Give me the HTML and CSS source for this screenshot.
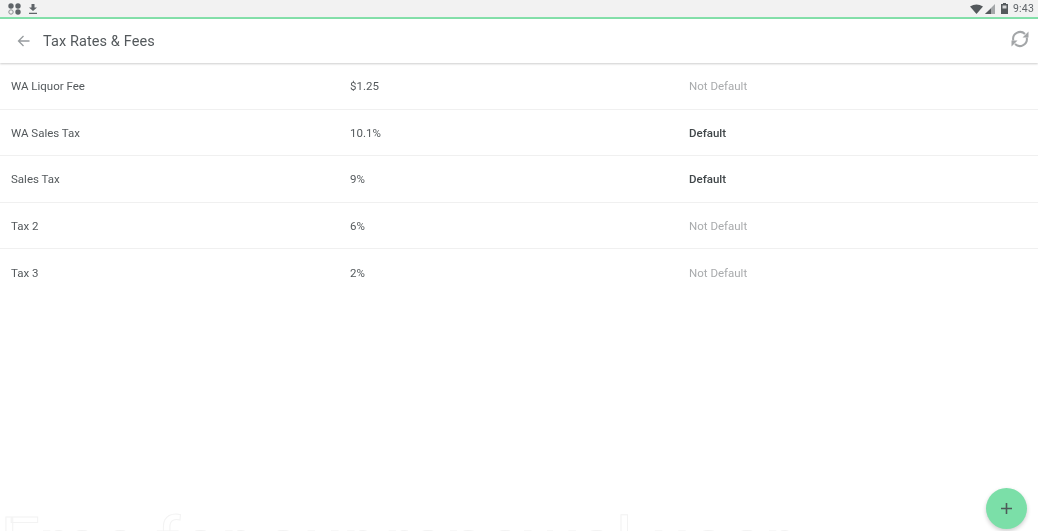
FILE: index.html
```html
<!DOCTYPE html>
<html lang="en">
<head>
<meta charset="utf-8">
<title>Tax Rates &amp; Fees</title>
<link rel="stylesheet" href="styles.css">
</head>
<body>
<div class="app">
  <header class="status">
    <div class="status-left">
      <svg class="ic" width="13" height="12" viewBox="0 0 13 12"><g fill="#5f6468"><circle cx="3" cy="3" r="2.700"/><circle cx="10" cy="3" r="2.700"/><circle cx="10" cy="9" r="2.700"/></g><circle cx="3" cy="9" r="2.200" fill="none" stroke="#8a8e91" stroke-width="1"/></svg>
      <svg class="ic" width="10" height="12" viewBox="0 0 10 12"><path d="M3.500 1h3v3.500H9L5 8 1 4.500h2.500zM1 9.800h8V11H1z" fill="#5f6468"/></svg>
    </div>
    <div class="status-right">
      <svg width="13" height="10" viewBox="0 0 13 10"><path d="M0 2.500Q6.500-1.500 13 2.500L6.500 10z" fill="#54595c"/></svg>
      <svg width="11" height="10" viewBox="0 0 11 10"><path d="M10 0v10H0z" fill="#a4a7a9"/><path d="M6 4.500v5.500H0z" fill="#54595c"/></svg>
      <svg class="batt" width="7" height="11" viewBox="0 0 7 11"><path d="M2 0h3v1h2v10H0V1h2z" fill="#54595c"/><path d="M1.500 2.500h4v3h-4z" fill="#d5d6d7"/></svg>
      <span class="clock">9:43</span>
    </div>
  </header>
  <nav class="toolbar">
    <svg class="back" width="13" height="12" viewBox="0 0 13 12"><path d="M12.500 6H1.500M6.500 1l-5 5 5 5" fill="none" stroke="#979b9e" stroke-width="1.300"/></svg>
    <h1 class="title">Tax Rates &amp; Fees</h1>
    <svg class="sync" width="18" height="18" viewBox="0 0 18 18"><g fill="none" stroke="#a3a6a8" stroke-width="2"><path d="M2.300 10.500A7 7 0 0 1 14 4"/><path d="M15.700 7.500A7 7 0 0 1 4 14"/></g><path d="M17.500 1.500v6h-6zM.5 16.500v-6h6z" fill="#a3a6a8"/></svg>
  </nav>
  <main class="list">
    <div class="row"><span>WA Liquor Fee</span><span>$1.25</span><span class="off">Not Default</span></div>
    <div class="row"><span>WA Sales Tax</span><span>10.1%</span><span class="on">Default</span></div>
    <div class="row"><span>Sales Tax</span><span>9%</span><span class="on">Default</span></div>
    <div class="row"><span>Tax 2</span><span>6%</span><span class="off">Not Default</span></div>
    <div class="row"><span>Tax 3</span><span>2%</span><span class="off">Not Default</span></div>
  </main>
  <div class="watermark">Free for our renewal user</div>
  <button class="fab" type="button"><svg width="11" height="11" viewBox="0 0 11 11"><path d="M5.500 0v11M0 5.500h11" stroke="#4d5a58" stroke-width="1.600"/></svg></button>
</div>
</body>
</html>
```
FILE: styles.css
```css
html, body { margin: 0; height: 100%; }
body { font-family: Roboto, "Liberation Sans", sans-serif; background: #fff; color: #54595c; overflow: hidden; }
.app { position: relative; width: 1038px; height: 531px; overflow: hidden; background: #fff; }
.status { height: 17px; background: #f2f2f2; border-bottom: 2px solid #84e0aa; display: flex; justify-content: space-between; align-items: center; padding: 0 4px 0 8px; box-sizing: content-box; filter: blur(.3px); }
.status-left, .status-right { display: flex; align-items: center; gap: 7px; }
.status-right { gap: 2px; }
.batt { margin: 0 3px 0 3px; }
.clock { font-size: 10.500px; color: #5f6468; letter-spacing: .2px; }
.toolbar { height: 44px; display: flex; align-items: center; padding: 0 9px 0 17px; box-shadow: 0 1px 2px rgba(0,0,0,.2); position: relative; z-index: 1; background: #fff; }
.back { margin-right: 13px; filter: blur(.4px); }
.title { flex: 1; margin: 0; font-size: 14.500px; font-weight: 400; color: #54595c; letter-spacing: .1px; filter: blur(.4px); }
.sync { margin: -5px 0 0 1px; filter: blur(.4px); }
.list { filter: blur(.4px); }
.row { display: grid; grid-template-columns: repeat(3, 339px); height: 46.500px; align-items: center; padding: 1px 11px 0; box-sizing: border-box; border-bottom: 1px solid #f0f0f0; font-size: 11.500px; color: #54595c; }
.row:last-child { border-bottom: 0; }
.off { color: #a9abad; }
.on { font-weight: 500; color: #41474a; }
.watermark { position: absolute; left: 0; top: 509px; font-size: 72px; line-height: 72px; font-family: Roboto, sans-serif; white-space: nowrap; color: transparent; -webkit-text-stroke: 1px #f3f3f3; letter-spacing: -.3px; }
.fab { position: absolute; left: 986px; top: 488px; width: 41px; height: 41px; padding: 0; border: 0; border-radius: 50%; background: #7bdfa8; box-shadow: 0 2px 4px rgba(0,0,0,.2); display: flex; align-items: center; justify-content: center; }
```
